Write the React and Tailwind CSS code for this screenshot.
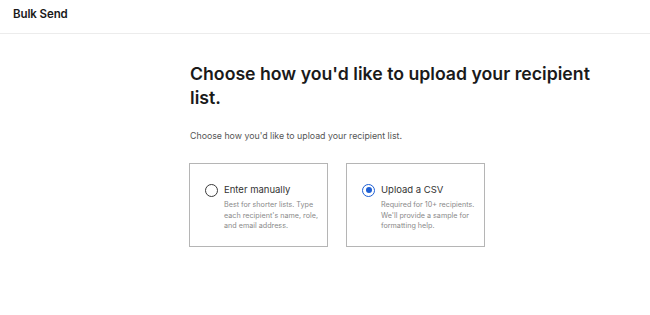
const OPTIONS = [
  {
    id: 'manual',
    title: 'Enter manually',
    lines: ['Best for shorter lists. Type', "each recipient's name, role,", 'and email address.'],
  },
  {
    id: 'csv',
    title: 'Upload a CSV',
    lines: ['Required for 10+ recipients.', "We'll provide a sample for", 'formatting help.'],
  },
];

function Radio({ checked }) {
  return (
    <span
      className={`flex h-[13px] w-[13px] shrink-0 items-center justify-center rounded-full border-[1.5px] ${
        checked ? 'border-[#1e5fd4]' : 'border-[#3a3a3a]'
      }`}
    >
      {checked && <span className="h-[6px] w-[6px] rounded-full bg-[#1e5fd4]" />}
    </span>
  );
}

function OptionCard({ option, checked }) {
  return (
    <div className="h-[84px] w-[139px] border border-[#b5b5b5] bg-white pl-[15px] pt-[19px]">
      <div className="flex items-center gap-[6px]">
        <Radio checked={checked} />
        <span className="text-[9.5px] text-[#333]">{option.title}</span>
      </div>
      <p className="mt-[3px] ml-[19px] whitespace-nowrap text-[7.2px] leading-[10.5px] text-[#8a8a8a]">
        {option.lines.map(l => (
          <span key={l} className="block">{l}</span>
        ))}
      </p>
    </div>
  );
}

export default function App() {
  const selected = 'csv';

  return (
    <div className="h-[315px] w-[650px] bg-white font-['Inter',sans-serif] text-[#1a1a1a]">
      <header className="h-[34px] border-b border-[#ececec] px-[13px] pt-[6px]">
        <h1 className="text-[11.5px] font-semibold tracking-[-0.1px]">Bulk Send</h1>
      </header>

      <main className="ml-[190px] pt-[28px]">
        <h2 className="w-[415px] text-[17.7px] font-semibold leading-[24px]">
          Choose how you'd like to upload your recipient list.
        </h2>
        <p className="mt-[19px] text-[8.8px] text-[#555]">Choose how you'd like to upload your recipient list.</p>

        <div className="-ml-px mt-[21px] flex gap-[18px]">
          {OPTIONS.map(o => (
            <OptionCard key={o.id} option={o} checked={o.id === selected} />
          ))}
        </div>
      </main>
    </div>
  );
}
